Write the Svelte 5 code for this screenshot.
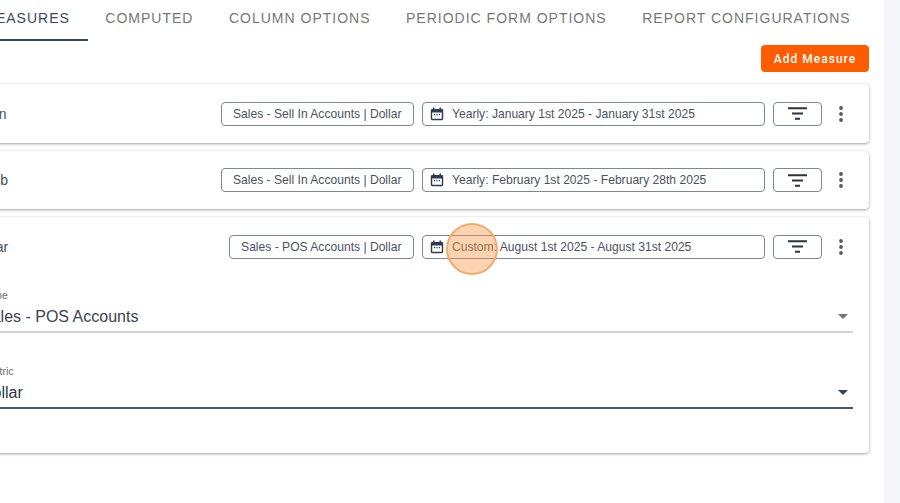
<script>
  const tabs = [
    { label: "MEASURES", active: true },
    { label: "COMPUTED" },
    { label: "COLUMN OPTIONS" },
    { label: "PERIODIC FORM OPTIONS" },
    { label: "REPORT CONFIGURATIONS" },
  ];

  const measures = [
    { name: "Jan", source: "Sales - Sell In Accounts | Dollar", kind: "Yearly", range: "January 1st 2025 - January 31st 2025" },
    { name: "Feb", source: "Sales - Sell In Accounts | Dollar", kind: "Yearly", range: "February 1st 2025 - February 28th 2025" },
    { name: "Mar", source: "Sales - POS Accounts | Dollar", kind: "Custom", range: "August 1st 2025 - August 31st 2025", open: true },
  ];
</script>

<div class="page">
  <main>
    <nav class="tabs">
      {#each tabs as tab}
        <div class="tab" class:active={tab.active}>{tab.label}</div>
      {/each}
    </nav>

    <div class="actions">
      <button class="add">Add Measure</button>
    </div>

    <div class="list">
      {#each measures as m}
        <section class="card">
          <div class="row">
            <span class="name">{m.name}</span>
            <div class="chip source">{m.source}</div>
            <div class="chip date">
              <svg class="cal" viewBox="0 0 14 14" width="14" height="14">
                <path fill="#2b3a55" d="M3 0.5h1.5V2h5V0.5H11V2h.8c.8 0 1.4.6 1.4 1.4v8.4c0 .8-.6 1.4-1.4 1.4H2.2c-.8 0-1.4-.6-1.4-1.4V3.4C.8 2.6 1.4 2 2.2 2H3zM2.2 5.4v6.4h9.6V5.4zM4 7h1.2v1.2H4zM6.4 7h1.2v1.2H6.4zM8.8 7H10v1.2H8.8z" fill-rule="evenodd" />
              </svg>
              <span>{m.kind}: {m.range}</span>
              {#if m.open}<i class="pulse"></i>{/if}
            </div>
            <div class="chip filter">
              <svg viewBox="0 0 20 13" width="20" height="13">
                <path stroke="#2b3444" stroke-width="2" d="M0 1.200h19M4 6.500h11M7 11.800h5" />
              </svg>
            </div>
            <svg class="dots" viewBox="0 0 4 16" width="4" height="16">
              <circle cx="2" cy="2" r="1.900" fill="#555b64" />
              <circle cx="2" cy="8" r="1.900" fill="#555b64" />
              <circle cx="2" cy="14" r="1.900" fill="#555b64" />
            </svg>
          </div>

          {#if m.open}
            <div class="fields">
              <div class="field">
                <label>Type</label>
                <div class="value"><span>Sales - POS Accounts</span><b class="caret"></b></div>
              </div>
              <div class="field focused">
                <label>Metric</label>
                <div class="value"><span>Dollar</span><b class="caret"></b></div>
              </div>
            </div>
          {/if}
        </section>
      {/each}
    </div>
  </main>
  <aside class="track"></aside>
</div>

<style>
  :global(body) {
    overflow: hidden;
    background: #fff;
  }
  .page {
    display: flex;
    width: 900px;
    height: 503px;
    overflow: hidden;
    font-family: "Liberation Sans", Arial, sans-serif;
  }
  main {
    flex: 1;
    min-width: 0;
    margin-left: -30px;
    padding-right: 15px;
  }
  .track {
    width: 16px;
    background: #f5f6f9;
  }
  .tabs {
    display: flex;
    height: 41px;
    margin-left: -4.5px;
  }
  .tab {
    box-sizing: border-box;
    height: 41px;
    padding: 10px 17.750px 0;
    font-size: 14px;
    line-height: 16px;
    letter-spacing: 1px;
    color: #777;
    white-space: nowrap;
  }
  .tab.active {
    color: #3d4a5c;
    border-bottom: 2px solid #33475b;
  }
  .actions {
    display: flex;
    justify-content: flex-end;
    padding-top: 4px;
  }
  .add {
    width: 108px;
    height: 27px;
    border: 0;
    border-radius: 4px;
    background: #ff5c00;
    color: #fff;
    font-family: Roboto, sans-serif;
    font-size: 12px;
    font-weight: 500;
    letter-spacing: 1px;
    padding: 0;
  }
  .list {
    display: flex;
    flex-direction: column;
    gap: 8px;
    margin-top: 12px;
  }
  .card {
    background: #fff;
    border-radius: 4px;
    box-shadow: 0 1px 3px rgba(0, 0, 0, 0.35), 0 0 2px rgba(0, 0, 0, 0.08);
  }
  .row {
    display: flex;
    align-items: center;
    box-sizing: border-box;
    height: 58.5px;
    padding: 1px 26px 0 14px;
    gap: 8px;
  }
  .name {
    flex: 1;
    font-size: 14px;
    color: #47505e;
  }
  .chip {
    display: flex;
    align-items: center;
    box-sizing: border-box;
    height: 24px;
    border: 1px solid #7f8793;
    border-radius: 4px;
    font-size: 12.100px;
    color: #4a5361;
    white-space: nowrap;
  }
  .source {
    padding: 0 11.500px;
  }
  .date {
    position: relative;
    width: 343px;
    padding-left: 7px;
    gap: 8px;
  }
  .filter {
    justify-content: center;
    width: 49px;
  }
  .dots {
    margin-left: 9px;
  }
  .pulse {
    position: absolute;
    left: 23px;
    top: -13px;
    width: 48px;
    height: 48px;
    border: 2px solid rgba(240, 170, 105, 0.95);
    border-radius: 50%;
    background: rgba(245, 150, 70, 0.42);
  }
  .fields {
    display: flex;
    flex-direction: column;
    gap: 32px;
    padding: 13px 16px 44px 10px;
  }
  .field label {
    display: block;
    margin-left: 5px;
    font-size: 10.500px;
    line-height: 13px;
    color: #6d6d6d;
  }
  .value {
    display: flex;
    justify-content: space-between;
    align-items: center;
    box-sizing: border-box;
    height: 31px;
    padding: 1px 5px 0 1px;
    font-size: 16px;
    color: #3a4350;
    border-bottom: 2px solid #d2d2d2;
  }
  .caret {
    width: 0;
    height: 0;
    border-left: 5px solid transparent;
    border-right: 5px solid transparent;
    border-top: 5px solid #757575;
  }
  .focused .value {
    color: #2c3440;
    border-bottom-color: #4a5666;
  }
  .focused .caret {
    border-top-color: #2f4660;
  }
</style>
